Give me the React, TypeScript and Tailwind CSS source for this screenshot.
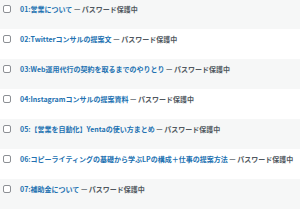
const posts = [
  '01:営業について',
  '02:Twitterコンサルの提案文',
  '03:Web運用代行の契約を取るまでのやりとり',
  '04:Instagramコンサルの提案資料',
  '05:【営業を自動化】Yentaの使い方まとめ',
  '06:コピーライティングの基礎から学ぶLPの構成＋仕事の提案方法',
  '07:補助金について',
];

const App = () => {
  return (
    <div
      className="h-[210px] w-[300px] overflow-hidden bg-white"
      style={{ fontFamily: '"Noto Sans CJK JP", "Noto Sans", sans-serif' }}
    >
      <div className="-mt-[1px]">
        {posts.map((title, i) => (
          <div
            key={title}
            className={`flex h-[30px] items-start pt-[5px] ${i % 2 === 0 ? 'bg-[#f6f7f7]' : 'bg-white'}`}
          >
            <div className="ml-[3px] mt-[1px] h-[8px] w-[8px] shrink-0 rounded-[2px] border border-[#8c8f94] bg-white" />
            <div className="ml-[9px] whitespace-nowrap text-[7px] leading-[10px] font-bold">
              <span className="text-[#2271b1]">{title}</span>
              <span className="text-[#50575e]"> — パスワード保護中</span>
            </div>
          </div>
        ))}
      </div>
    </div>
  );
};

export default App;
